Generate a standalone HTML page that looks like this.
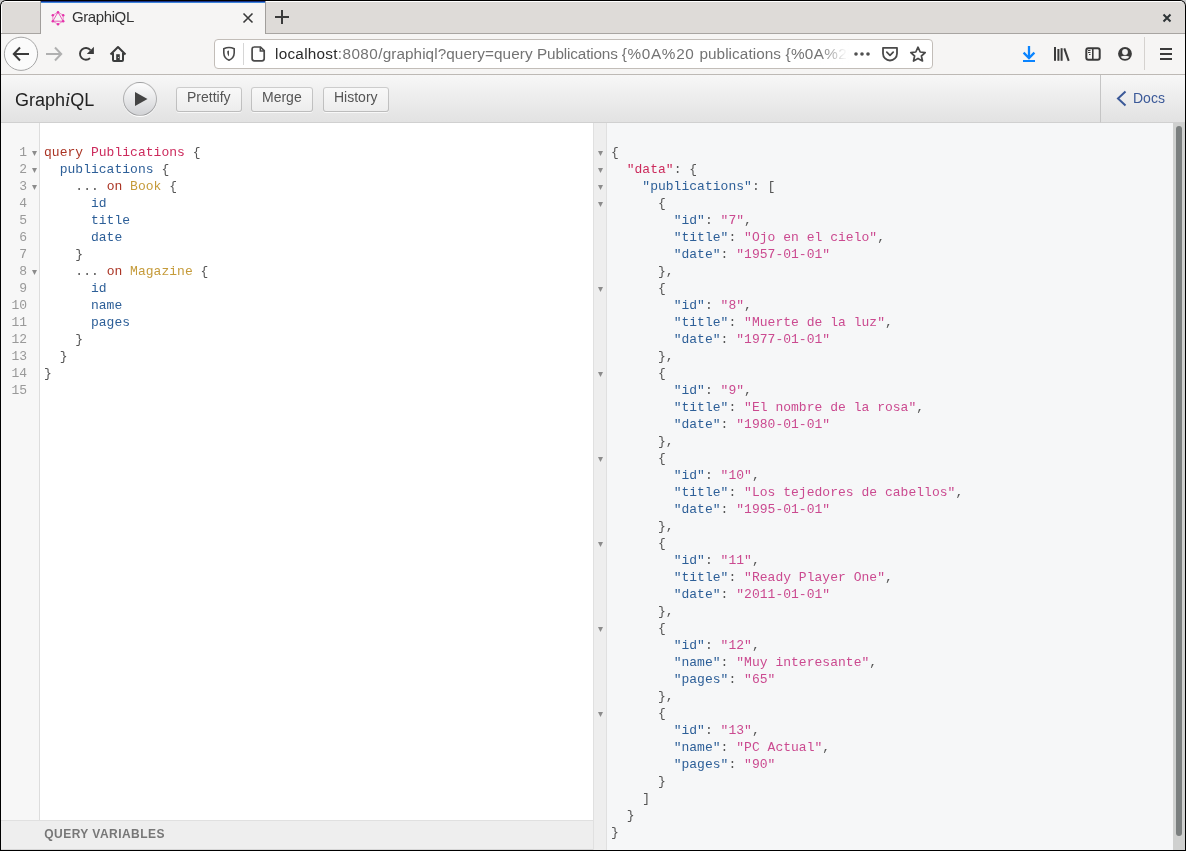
<!DOCTYPE html>
<html><head><meta charset="utf-8">
<style>
*{box-sizing:border-box;margin:0;padding:0}
html,body{width:1186px;height:851px;overflow:hidden;background:#c8c8c8;font-family:"Liberation Sans",sans-serif}
#win{position:absolute;left:0;top:0;width:1186px;height:851px;background:#000;border-radius:6px 6px 0 0;overflow:hidden}
.abs{position:absolute;will-change:transform}
#tabbar{left:1px;top:1px;width:1184px;height:33px;background:#dedbd8;border-top:1px solid #fff;border-left:1px solid #fff;border-radius:5px 5px 0 0}
#tabline{left:1px;top:33px;width:1184px;height:1px;background:#a8a5a2}
#tab{left:41px;top:1px;width:224px;height:33px;background:#f6f5f4}
#tabtop{left:41px;top:1px;width:224px;height:2px;background:linear-gradient(#14308a 0,#14308a 50%,#3d85dc 50%)}
#tabtitle{left:72px;top:8.3px;font-size:15px;letter-spacing:-0.4px;color:#333;white-space:nowrap}
#navbar{left:1px;top:34px;width:1184px;height:41px;background:#f6f5f4;border-bottom:1px solid #bdb9b5}
#urlbox{left:214px;top:39px;width:719px;height:30px;background:#fff;border:1px solid #c2bdb8;border-radius:4px}
.ut{top:45px;font-size:15.3px;color:#737373;white-space:pre}
.ut.dk{color:#2a2a2a}
#topbar{left:1px;top:75px;width:1100px;height:48px;background:linear-gradient(#f7f7f7,#e2e2e2);border-bottom:1px solid #d0d0d0}
#docsbtn{left:1100px;top:75px;width:85px;height:48px;background:linear-gradient(#f7f7f7,#e2e2e2);border-bottom:1px solid #d0d0d0;border-left:1px solid #c5c5c5}
#gtitle{left:15px;top:88.5px;font-size:18px;color:#222;white-space:nowrap}
#gtitle em{font-family:"Liberation Serif",serif;font-size:19px}
#exec{left:123px;top:82px;width:34px;height:34px;border-radius:17px;background:linear-gradient(#fdfdfd,#d2d3d6);border:1px solid rgba(0,0,0,.25);box-shadow:0 1px 0 #fff}
.tbtn{top:87px;height:25px;border-radius:3px;background:linear-gradient(#f9f9f9,#ececec);box-shadow:inset 0 0 0 1px rgba(0,0,0,.2),0 1px 0 rgba(255,255,255,.7),inset 0 1px #fff;color:#555;font-size:14px;padding:2px 11px 6px;white-space:nowrap;line-height:17px}
#left{left:1px;top:123px;width:592px;height:697px;background:#fff}
#lgut{left:1px;top:123px;width:39px;height:697px;background:#f7f7f7;border-right:1px solid #ddd}
#vartitle{left:1px;top:820px;width:592px;height:30px;background:#eee;border-top:1px solid #e0e0e0;border-bottom:1px solid #d6d6d6;color:#777;font-weight:bold;font-size:12px;letter-spacing:0.45px;padding:6px 0 0 43.3px;line-height:14px}
#right{left:593px;top:123px;width:592px;height:727px;background:#f6f7f8;border-left:1px solid #e0e0e0}
#rgut{left:594px;top:123px;width:13px;height:727px;background:#eee;border-right:1px solid #e0e0e0}
#sb{left:1173px;top:123px;width:12px;height:727px;background:#cfd0cf}
#thumb{left:1176px;top:126px;width:6px;height:710px;background:#7b7f7f;border-radius:3px}
.code{font-family:"Liberation Mono",monospace;font-size:13px;letter-spacing:0.026px;line-height:17px;white-space:pre;color:#555}
.ln{position:absolute;font-family:"Liberation Mono",monospace;font-size:13px;line-height:17px;color:#999;text-align:right;width:26px;left:1px}
.fm{position:absolute;width:0;height:0;border-left:2.5px solid transparent;border-right:2.5px solid transparent;border-top:5px solid #8a8a8a;margin-top:7px}
.kw{color:#aa3424}.df{color:#cc2a5c}.pr{color:#2d5f98}.at{color:#c59b3a}.st{color:#cb4a90}
</style></head><body>
<div id="win">
 <div class="abs" id="tabbar"></div>
 <div class="abs" id="tabline"></div>
 <div class="abs" id="tab"></div>
 <div class="abs" id="tabtop"></div>
 <div class="abs" id="tabtitle">GraphiQL</div>
 <div class="abs" id="navbar"></div>
 <div class="abs" id="urlbox"></div>
 <div class="abs ut" style="left:274.8px;width:572px;overflow:hidden"><span style="letter-spacing:0.269px;color:#2a2a2a">localhost</span><span style="letter-spacing:0.411px">:8080/</span><span style="letter-spacing:0.051px">graphiql?</span><span style="letter-spacing:0.090px">query=query </span><span style="letter-spacing:-0.149px">Publications </span><span style="letter-spacing:0.663px">{%0A%20 </span><span style="letter-spacing:0.073px">publications </span><span style="letter-spacing:0.378px">{%0A%20 publications</span></div>
 <div class="abs" style="left:820px;top:42px;width:30px;height:24px;background:linear-gradient(to right,rgba(255,255,255,0),rgba(255,255,255,.9) 80%,#fff)"></div>


 <div class="abs" style="left:40px;top:1px;width:1px;height:33px;background:#a19e9b"></div>
 <div class="abs" style="left:265px;top:1px;width:1px;height:33px;background:#a19e9b"></div>
 <svg class="abs" style="left:0;top:0" width="1186" height="75" viewBox="0 0 1186 75">
  <!-- graphql logo -->
  <g stroke="#e535ab" fill="none">
   <path d="M58 12.2 L63.2 15.2 L63.2 21.2 L58 24.2 L52.8 21.2 L52.8 15.2 Z" stroke-width="0.7" opacity="0.8"/>
   <path d="M58 12.2 L63.2 21.2 L52.8 21.2 Z" stroke-width="0.8"/>
  </g>
  <g fill="#e535ab">
   <circle cx="58" cy="12.2" r="1.25"/><circle cx="63.2" cy="15.2" r="1.25"/><circle cx="63.2" cy="21.2" r="1.25"/>
   <circle cx="58" cy="24.2" r="1.25"/><circle cx="52.8" cy="21.2" r="1.25"/><circle cx="52.8" cy="15.2" r="1.25"/>
  </g>
  <!-- close tab -->
  <path d="M243.5 13.5 L252.5 22.5 M252.5 13.5 L243.5 22.5" stroke="#3a3a3a" stroke-width="1.6"/>
  <!-- new tab + -->
  <path d="M282 10 L282 24 M275 17 L289 17" stroke="#3a3a3a" stroke-width="2"/>
  <!-- window close -->
  <path d="M1163.5 14.5 L1170.5 21.5 M1170.5 14.5 L1163.5 21.5" stroke="#2e3436" stroke-width="2"/>
  <!-- back circle -->
  <circle cx="21" cy="53.8" r="16.6" fill="#fbfbfb" stroke="#a5a5a5" stroke-width="1"/>
  <path d="M14 54 L29 54 M20 47.5 L13.8 54 L20 60.5" stroke="#3b3b3b" stroke-width="2" fill="none"/>
  <!-- forward -->
  <path d="M46 54 L61 54 M55 47.5 L61.2 54 L55 60.5" stroke="#b0b0b0" stroke-width="2" fill="none"/>
  <!-- reload -->
  <path d="M90.42 50.1 A5.9 5.9 0 1 0 90.07 58.07" stroke="#3b3b3b" stroke-width="1.9" fill="none"/>
  <path d="M93.9 46.8 L93.9 54.1 L86.8 54.1 Z" fill="#3b3b3b"/>
  <!-- home -->
  <path d="M110.5 54.5 L118 47 L125.5 54.5" stroke="#3b3b3b" stroke-width="2" fill="none" stroke-linejoin="round"/>
  <path d="M113 53 L113 60 Q113 61 114 61 L122 61 Q123 61 123 60 L123 53" stroke="#3b3d3d" stroke-width="2" fill="none"/>
  <rect x="116.2" y="54.2" width="3.6" height="6.8" fill="#3b3d3d"/>
  <circle cx="118.4" cy="57.5" r="0.6" fill="#e8e8e8"/>
  <!-- shield -->
  <path d="M223.8 48.8 Q229 46.2 234.2 48.8 L234.2 53 Q234 58.2 229 60.2 Q224 58.2 223.8 53 Z" stroke="#4a4a4a" stroke-width="1.6" fill="none"/>
  <path d="M227.3 51 L229 50.6 L229 56.6 Q227.6 55 227.3 53 Z" fill="#4a4a4a"/>
  <rect x="243" y="43" width="1" height="22" fill="#d6d6d6"/>
  <!-- page -->
  <path d="M254 47 L260.5 47 L264.2 50.7 L264.2 58.5 Q264.2 60.8 262 60.8 L254.3 60.8 Q252.1 60.8 252.1 58.5 L252.1 49.3 Q252.1 47 254.3 47 Z" stroke="#4a4a4a" stroke-width="1.7" fill="none"/>
  <path d="M260.3 47.3 L260.3 51 L264 51" stroke="#4a4a4a" stroke-width="1.5" fill="none"/>
  <!-- dots -->
  <circle cx="856" cy="54" r="1.8" fill="#505050"/><circle cx="862" cy="54" r="1.8" fill="#505050"/><circle cx="868" cy="54" r="1.8" fill="#505050"/>
  <!-- pocket -->
  <path d="M883 47.8 L897 47.8 L897 53.5 A7 7 0 0 1 883 53.5 Z" stroke="#4a4a4a" stroke-width="1.8" fill="none" stroke-linejoin="round"/>
  <path d="M886.8 52.2 L890 55.4 L893.2 52.2" stroke="#4a4a4a" stroke-width="1.7" fill="none" stroke-linecap="round" stroke-linejoin="round"/>
  <!-- star -->
  <path d="M918 47.2 L920.2 52 L925.2 52.6 L921.4 56 L922.5 61 L918 58.4 L913.5 61 L914.6 56 L910.8 52.6 L915.8 52 Z" stroke="#4a4a4a" stroke-width="1.7" fill="none" stroke-linejoin="round"/>
  <!-- download -->
  <path d="M1029 46 L1029 58" stroke="#0a84ff" stroke-width="2.3"/>
  <path d="M1023.6 52.6 L1029 58 L1034.4 52.6" stroke="#0a84ff" stroke-width="2.3" fill="none"/>
  <rect x="1023" y="60" width="12" height="2" fill="#0a84ff"/>
  <!-- library -->
  <rect x="1054" y="47" width="2" height="13.8" fill="#3b3b3b"/>
  <rect x="1057.4" y="49" width="2" height="11.8" fill="#3b3b3b"/>
  <rect x="1060.6" y="48.2" width="2" height="12.6" fill="#3b3b3b"/>
  <path d="M1064.3 48.3 L1068.7 60.8" stroke="#3b3b3b" stroke-width="2"/>
  <!-- sidebar -->
  <rect x="1086.3" y="48.3" width="13.4" height="11.4" rx="2" stroke="#3b3b3b" stroke-width="2" fill="none"/>
  <rect x="1092" y="48" width="1.6" height="12" fill="#3b3b3b"/>
  <rect x="1088" y="50" width="2.5" height="1" fill="#3b3b3b"/>
  <rect x="1088" y="52" width="2.5" height="1" fill="#3b3b3b"/>
  <rect x="1089" y="54" width="1.5" height="1" fill="#3b3b3b"/>
  <!-- account -->
  <circle cx="1125" cy="53.8" r="6.9" fill="#3b3b3b"/>
  <circle cx="1125" cy="52" r="2.9" fill="#f2f2f2"/>
  <path d="M1120.6 56.8 Q1125 54.6 1129.4 56.8 Q1128 59 1125 59 Q1122 59 1120.6 56.8 Z" fill="#f2f2f2"/>
  <rect x="1144" y="37" width="1" height="33" fill="#d5d2cf"/>
  <!-- hamburger -->
  <rect x="1160" y="48" width="12" height="2" fill="#3b3b3b"/>
  <rect x="1160" y="53" width="12" height="2" fill="#3b3b3b"/>
  <rect x="1160" y="58" width="12" height="2" fill="#3b3b3b"/>
 </svg>
 <div class="abs" id="topbar"></div>
 <div class="abs" id="docsbtn"></div>
 <div class="abs" id="gtitle">Graph<em>i</em>QL</div>
 <div class="abs" id="exec"></div>
 <svg class="abs" style="left:123px;top:82px" width="34" height="34" viewBox="0 0 34 34"><path d="M 12 10 L 24.5 17 L 12 24 z" fill="#444"/></svg>
 <svg class="abs" style="left:1110px;top:85px" width="20" height="26" viewBox="0 0 20 26"><path d="M15.5 6.5 L8 13.5 L15.5 20.5" stroke="#3B5998" stroke-width="2" fill="none"/></svg>
 <div class="abs" style="left:1133px;top:90px;font-size:14px;color:#3B5998">Docs</div>
 <div class="abs tbtn" style="left:176px">Prettify</div>
 <div class="abs tbtn" style="left:251px">Merge</div>
 <div class="abs tbtn" style="left:323px">History</div>
 <div class="abs" id="left"></div>
 <div class="abs" id="lgut"></div>
 <div class="abs" id="vartitle">QUERY VARIABLES</div>
 <div class="abs" id="right"></div>
 <div class="abs" id="rgut"></div>
 <div class="ln" style="top:144px">1</div>
<svg class="abs" style="left:31.5px;top:151px" width="6" height="6"><path d="M0 0H5L2.5 5Z" fill="#8c8c8c"/></svg>
<div class="abs code" style="left:44px;top:144px"><span class="kw">query</span> <span class="df">Publications</span> {</div>
<div class="ln" style="top:161px">2</div>
<svg class="abs" style="left:31.5px;top:168px" width="6" height="6"><path d="M0 0H5L2.5 5Z" fill="#8c8c8c"/></svg>
<div class="abs code" style="left:44px;top:161px">  <span class="pr">publications</span> {</div>
<div class="ln" style="top:178px">3</div>
<svg class="abs" style="left:31.5px;top:185px" width="6" height="6"><path d="M0 0H5L2.5 5Z" fill="#8c8c8c"/></svg>
<div class="abs code" style="left:44px;top:178px">    ... <span class="kw">on</span> <span class="at">Book</span> {</div>
<div class="ln" style="top:195px">4</div>
<div class="abs code" style="left:44px;top:195px">      <span class="pr">id</span></div>
<div class="ln" style="top:212px">5</div>
<div class="abs code" style="left:44px;top:212px">      <span class="pr">title</span></div>
<div class="ln" style="top:229px">6</div>
<div class="abs code" style="left:44px;top:229px">      <span class="pr">date</span></div>
<div class="ln" style="top:246px">7</div>
<div class="abs code" style="left:44px;top:246px">    }</div>
<div class="ln" style="top:263px">8</div>
<svg class="abs" style="left:31.5px;top:270px" width="6" height="6"><path d="M0 0H5L2.5 5Z" fill="#8c8c8c"/></svg>
<div class="abs code" style="left:44px;top:263px">    ... <span class="kw">on</span> <span class="at">Magazine</span> {</div>
<div class="ln" style="top:280px">9</div>
<div class="abs code" style="left:44px;top:280px">      <span class="pr">id</span></div>
<div class="ln" style="top:297px">10</div>
<div class="abs code" style="left:44px;top:297px">      <span class="pr">name</span></div>
<div class="ln" style="top:314px">11</div>
<div class="abs code" style="left:44px;top:314px">      <span class="pr">pages</span></div>
<div class="ln" style="top:331px">12</div>
<div class="abs code" style="left:44px;top:331px">    }</div>
<div class="ln" style="top:348px">13</div>
<div class="abs code" style="left:44px;top:348px">  }</div>
<div class="ln" style="top:365px">14</div>
<div class="abs code" style="left:44px;top:365px">}</div>
<div class="ln" style="top:382px">15</div>
<div class="abs code" style="left:44px;top:382px"></div>
<svg class="abs" style="left:598px;top:151px" width="6" height="6"><path d="M0 0H5L2.5 5Z" fill="#8c8c8c"/></svg>
<div class="abs code" style="left:611px;top:144px">{</div>
<svg class="abs" style="left:598px;top:168px" width="6" height="6"><path d="M0 0H5L2.5 5Z" fill="#8c8c8c"/></svg>
<div class="abs code" style="left:611px;top:161px">  <span class="df">"data"</span>: {</div>
<svg class="abs" style="left:598px;top:185px" width="6" height="6"><path d="M0 0H5L2.5 5Z" fill="#8c8c8c"/></svg>
<div class="abs code" style="left:611px;top:178px">    <span class="pr">"publications"</span>: [</div>
<svg class="abs" style="left:598px;top:202px" width="6" height="6"><path d="M0 0H5L2.5 5Z" fill="#8c8c8c"/></svg>
<div class="abs code" style="left:611px;top:195px">      {</div>
<div class="abs code" style="left:611px;top:212px">        <span class="pr">"id"</span>: <span class="st">"7"</span>,</div>
<div class="abs code" style="left:611px;top:229px">        <span class="pr">"title"</span>: <span class="st">"Ojo en el cielo"</span>,</div>
<div class="abs code" style="left:611px;top:246px">        <span class="pr">"date"</span>: <span class="st">"1957-01-01"</span></div>
<div class="abs code" style="left:611px;top:263px">      },</div>
<svg class="abs" style="left:598px;top:287px" width="6" height="6"><path d="M0 0H5L2.5 5Z" fill="#8c8c8c"/></svg>
<div class="abs code" style="left:611px;top:280px">      {</div>
<div class="abs code" style="left:611px;top:297px">        <span class="pr">"id"</span>: <span class="st">"8"</span>,</div>
<div class="abs code" style="left:611px;top:314px">        <span class="pr">"title"</span>: <span class="st">"Muerte de la luz"</span>,</div>
<div class="abs code" style="left:611px;top:331px">        <span class="pr">"date"</span>: <span class="st">"1977-01-01"</span></div>
<div class="abs code" style="left:611px;top:348px">      },</div>
<svg class="abs" style="left:598px;top:372px" width="6" height="6"><path d="M0 0H5L2.5 5Z" fill="#8c8c8c"/></svg>
<div class="abs code" style="left:611px;top:365px">      {</div>
<div class="abs code" style="left:611px;top:382px">        <span class="pr">"id"</span>: <span class="st">"9"</span>,</div>
<div class="abs code" style="left:611px;top:399px">        <span class="pr">"title"</span>: <span class="st">"El nombre de la rosa"</span>,</div>
<div class="abs code" style="left:611px;top:416px">        <span class="pr">"date"</span>: <span class="st">"1980-01-01"</span></div>
<div class="abs code" style="left:611px;top:433px">      },</div>
<svg class="abs" style="left:598px;top:457px" width="6" height="6"><path d="M0 0H5L2.5 5Z" fill="#8c8c8c"/></svg>
<div class="abs code" style="left:611px;top:450px">      {</div>
<div class="abs code" style="left:611px;top:467px">        <span class="pr">"id"</span>: <span class="st">"10"</span>,</div>
<div class="abs code" style="left:611px;top:484px">        <span class="pr">"title"</span>: <span class="st">"Los tejedores de cabellos"</span>,</div>
<div class="abs code" style="left:611px;top:501px">        <span class="pr">"date"</span>: <span class="st">"1995-01-01"</span></div>
<div class="abs code" style="left:611px;top:518px">      },</div>
<svg class="abs" style="left:598px;top:542px" width="6" height="6"><path d="M0 0H5L2.5 5Z" fill="#8c8c8c"/></svg>
<div class="abs code" style="left:611px;top:535px">      {</div>
<div class="abs code" style="left:611px;top:552px">        <span class="pr">"id"</span>: <span class="st">"11"</span>,</div>
<div class="abs code" style="left:611px;top:569px">        <span class="pr">"title"</span>: <span class="st">"Ready Player One"</span>,</div>
<div class="abs code" style="left:611px;top:586px">        <span class="pr">"date"</span>: <span class="st">"2011-01-01"</span></div>
<div class="abs code" style="left:611px;top:603px">      },</div>
<svg class="abs" style="left:598px;top:627px" width="6" height="6"><path d="M0 0H5L2.5 5Z" fill="#8c8c8c"/></svg>
<div class="abs code" style="left:611px;top:620px">      {</div>
<div class="abs code" style="left:611px;top:637px">        <span class="pr">"id"</span>: <span class="st">"12"</span>,</div>
<div class="abs code" style="left:611px;top:654px">        <span class="pr">"name"</span>: <span class="st">"Muy interesante"</span>,</div>
<div class="abs code" style="left:611px;top:671px">        <span class="pr">"pages"</span>: <span class="st">"65"</span></div>
<div class="abs code" style="left:611px;top:688px">      },</div>
<svg class="abs" style="left:598px;top:712px" width="6" height="6"><path d="M0 0H5L2.5 5Z" fill="#8c8c8c"/></svg>
<div class="abs code" style="left:611px;top:705px">      {</div>
<div class="abs code" style="left:611px;top:722px">        <span class="pr">"id"</span>: <span class="st">"13"</span>,</div>
<div class="abs code" style="left:611px;top:739px">        <span class="pr">"name"</span>: <span class="st">"PC Actual"</span>,</div>
<div class="abs code" style="left:611px;top:756px">        <span class="pr">"pages"</span>: <span class="st">"90"</span></div>
<div class="abs code" style="left:611px;top:773px">      }</div>
<div class="abs code" style="left:611px;top:790px">    ]</div>
<div class="abs code" style="left:611px;top:807px">  }</div>
<div class="abs code" style="left:611px;top:824px">}</div>
 <div class="abs" id="sb"></div>
 <div class="abs" id="thumb"></div>
</div>
</body></html>
